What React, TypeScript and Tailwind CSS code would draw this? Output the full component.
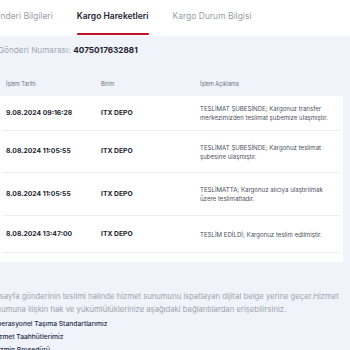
import React from "react";

const rows = [
	{
		date: "9.08.2024 09:16:28",
		unit: "ITX DEPO",
		desc: "TESLİMAT ŞUBESİNDE; Kargonuz transfer merkezimizden teslimat şubemize ulaşmıştır.",
		h: "h-[35px]",
	},
	{
		date: "8.08.2024 11:05:55",
		unit: "ITX DEPO",
		desc: "TESLİMAT ŞUBESİNDE; Kargonuz teslimat şubesine ulaşmıştır.",
		h: "h-[42px]",
	},
	{
		date: "8.08.2024 11:05:55",
		unit: "ITX DEPO",
		desc: "TESLİMATTA; Kargonuz alıcıya ulaştırılmak üzere teslimattadır.",
		h: "h-[43px]",
	},
	{
		date: "8.08.2024 13:47:00",
		unit: "ITX DEPO",
		desc: "TESLİM EDİLDİ; Kargonuz teslim edilmiştir.",
		h: "h-[37px]",
	},
];

const links = [
	"Operasyonel Taşıma Standartlarımız",
	"Hizmet Taahhütlerimiz",
	"Tazmin Prosedürü",
];

export default function App() {
	return (
		<div className="w-[350px] h-[350px] overflow-hidden bg-[#f0f3f9] font-['Inter',sans-serif]">
			{/* Sekmeler */}
			<div className="bg-white h-[36px] flex items-end gap-[24px] -ml-[11px]">
				<div className="pb-[13px] text-[8.5px] text-[#9aa0aa]">Gönderi Bilgileri</div>
				<div className="relative pb-[13px] text-[8.5px] font-semibold text-[#1f2330]">
					Kargo Hareketleri
					<span className="absolute left-0 right-0 bottom-[1px] h-[2.5px] bg-[#c40f23] rounded-full" />
				</div>
				<div className="pb-[13px] text-[8.5px] text-[#9aa0aa]">Kargo Durum Bilgisi</div>
			</div>

			{/* Gönderi numarası */}
			<div className="h-[28px] flex items-center -ml-[2px] text-[8.2px]">
				<span className="text-[#a3a8b2]">Gönderi Numarası:</span>
				<span className="ml-[3px] font-bold text-[#1f2330]">4075017632881</span>
			</div>

			{/* Tablo */}
			<div className="w-[343px]">
				<div className="h-[32px] flex items-center pt-[9px] text-[5.5px] text-[#6b7180]">
					<div className="w-[101px] pl-[6px]">İşlem Tarihi</div>
					<div className="w-[99px]">Birim</div>
					<div>İşlem Açıklama</div>
				</div>
				<div className="bg-white pb-[9px]">
					{rows.map((r, i) => (
						<div
							key={i}
							className={`${r.h} flex items-center mx-[3px] border-b border-[#eceef2]`}>
							<div className="w-[98px] pl-[3px] text-[6.8px] font-bold text-[#23262f]">
								{r.date}
							</div>
							<div className="w-[99px] text-[6.8px] font-bold text-[#23262f]">{r.unit}</div>
							<div className="w-[136px] text-[6.1px] leading-[9px] text-[#4b4f59]">{r.desc}</div>
						</div>
					))}
				</div>
			</div>

			{/* Açıklama ve bağlantılar */}
			<div className="-ml-[12px] mt-[28px] w-[360px]">
				<p className="text-[7.7px] leading-[13px] text-[#9ea3ad]">
					Bu sayfa gönderinin teslimi halinde hizmet sunumunu ispatlayan dijital belge yerine geçer.Hizmet sunumuna ilişkin hak ve yükümlülüklerinize aşağıdaki bağlantılardan erişebilirsiniz.
				</p>
				<ul className="ml-[4px] mt-[2px]">
					{links.map((l) => (
						<li key={l} className="h-[13px] flex items-center text-[6.7px] font-medium text-[#1f2d4d]">
							{l}
						</li>
					))}
				</ul>
			</div>
		</div>
	);
}
